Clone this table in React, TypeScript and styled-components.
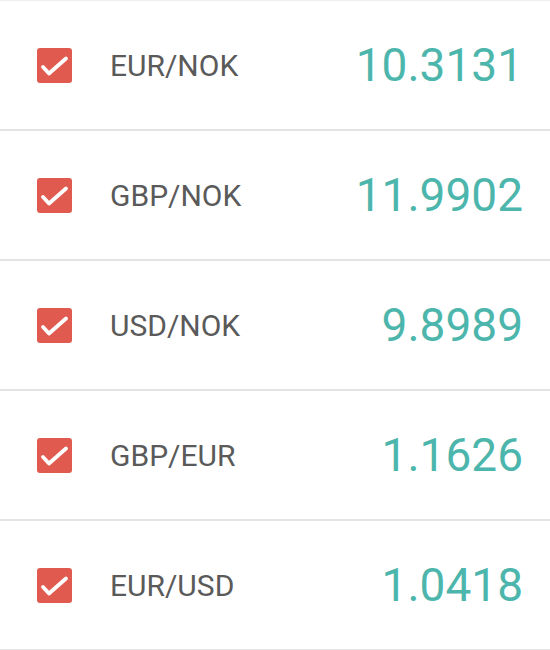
import React from "react";
import styled, { createGlobalStyle } from "styled-components";

const Global = createGlobalStyle`
  html, body { margin: 0; padding: 0; background: #ffffff; }
  body { font-family: Roboto, "Liberation Sans", sans-serif; }
`;

const List = styled.ul`
  list-style: none;
  margin: 0;
  padding: 0;
  width: 550px;
  border-top: 1px solid #eeeeee;
`;

const Row = styled.li`
  display: flex;
  align-items: center;
  height: 128px;
  padding: 0 27px 0 37px;
  border-bottom: 2px solid #e4e4e4;
`;

const Box = styled.span`
  flex: none;
  width: 35px;
  height: 35px;
  border-radius: 3px;
  background: #e05a50;
  display: flex;
`;

const Label = styled.span`
  margin-left: 38px;
  font-size: 30px;
  color: #5a5a5a;
  flex: 1;
`;

const Rate = styled.span`
  font-size: 46px;
  color: #4db6ac;
`;

const rows = [
  ["EUR/NOK", "10.3131"],
  ["GBP/NOK", "11.9902"],
  ["USD/NOK", "9.8989"],
  ["GBP/EUR", "1.1626"],
  ["EUR/USD", "1.0418"],
];

const Check = () => (
  <svg width="35" height="35" viewBox="0 0 35 35">
    <path d="M6 19 L12 25.5 L29 10.5" fill="none" stroke="#fff" strokeWidth="3.8" strokeLinecap="round" strokeLinejoin="round" />
  </svg>
);

export default function App() {
  return (
    <>
      <Global />
      <List>
        {rows.map(([pair, rate]) => (
          <Row key={pair}>
            <Box><Check /></Box>
            <Label>{pair}</Label>
            <Rate>{rate}</Rate>
          </Row>
        ))}
      </List>
    </>
  );
}
